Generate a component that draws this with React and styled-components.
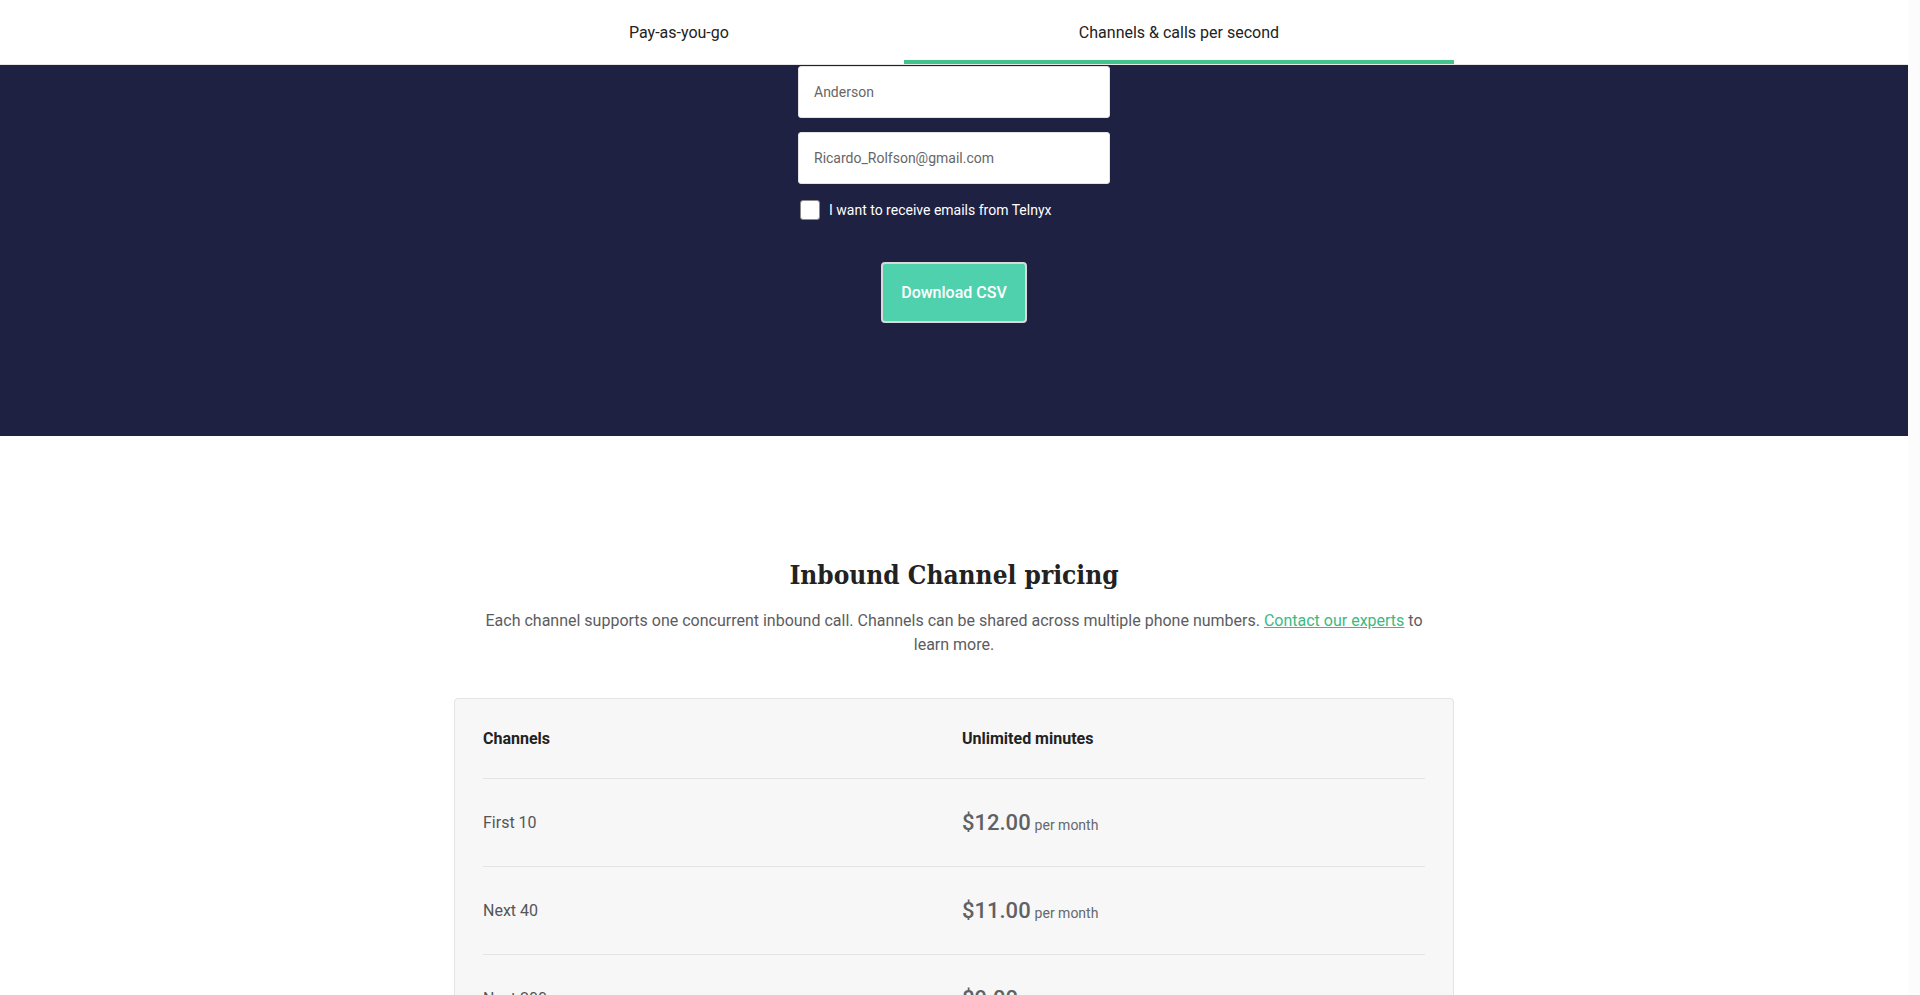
import React from "react";
import styled, { createGlobalStyle } from "styled-components";

const GlobalStyle = createGlobalStyle`
  html {
    background: #fcfcfc;
  }
  body {
    margin: 0 12px 0 0;
    padding: 0;
    background: #ffffff;
    font-family: Roboto, "Liberation Sans", sans-serif;
    color: #222;
  }
  * {
    box-sizing: border-box;
  }
`;

const tiers = [
  { label: "First 10", price: "$12.00" },
  { label: "Next 40", price: "$11.00" },
  { label: "Next 200", price: "$9.00" },
  { label: "Next 750", price: "$8.00" },
];

function App() {
  return (
    <>
      <GlobalStyle />
      <TabBar>
        <TabRow>
          <Tab>Pay-as-you-go</Tab>
          <Tab $active>Channels &amp; calls per second</Tab>
        </TabRow>
      </TabBar>

      <FormBand>
        <Form>
          <Field defaultValue="Anderson" />
          <Field defaultValue="Ricardo_Rolfson@gmail.com" />
          <CheckRow>
            <Box type="checkbox" />
            <span>I want to receive emails from Telnyx</span>
          </CheckRow>
          <DownloadBtn>Download CSV</DownloadBtn>
        </Form>
      </FormBand>

      <Pricing>
        <Title>Inbound Channel pricing</Title>
        <Lead>
          Each channel supports one concurrent inbound call. Channels can be
          shared across multiple phone numbers.{" "}
          <GreenLink href="#">Contact our experts</GreenLink> to learn more.
        </Lead>
        <Card>
          <HeadRow>
            <div>Channels</div>
            <div>Unlimited minutes</div>
          </HeadRow>
          {tiers.map((t) => (
            <Row key={t.label}>
              <div>{t.label}</div>
              <div>
                <Price>{t.price}</Price> <Per>per month</Per>
              </div>
            </Row>
          ))}
        </Card>
      </Pricing>
    </>
  );
}

const TabBar = styled.nav`
  background: #fff;
  border-bottom: 1px solid #e6e6e9;
`;

const TabRow = styled.div`
  display: flex;
  width: 1000px;
  margin: 0 auto;
`;

const Tab = styled.div`
  flex: 1 1 auto;
  height: 64px;
  display: flex;
  align-items: center;
  justify-content: center;
  padding-top: 4px;
  font-size: 16px;
  color: #222;
  border-bottom: 4px solid ${(p) => (p.$active ? "#42c38c" : "transparent")};
`;

const FormBand = styled.section`
  background: #1f2142;
  padding: 1px 0 113px;
`;

const Form = styled.div`
  width: 312px;
  margin: 0 auto;
  display: flex;
  flex-direction: column;
  align-items: center;
`;

const Field = styled.input`
  width: 100%;
  height: 52px;
  border: 1px solid #e3e3e3;
  border-radius: 3px;
  padding: 0 15px;
  font-family: Roboto, sans-serif;
  font-size: 14px;
  color: #666;
  background: #fff;
  outline: none;
  & + & {
    margin-top: 14px;
  }
`;

const CheckRow = styled.label`
  align-self: stretch;
  display: flex;
  align-items: center;
  gap: 9px;
  margin-top: 16px;
  padding-left: 2px;
  font-size: 14px;
  color: #fff;
`;

const Box = styled.input`
  appearance: none;
  margin: 0;
  width: 20px;
  height: 20px;
  background: #fff;
  border: 1px solid #8a8a8a;
  border-radius: 3px;
`;

const DownloadBtn = styled.button`
  margin-top: 42px;
  padding: 18px 18px;
  line-height: 21px;
  font-family: Roboto, sans-serif;
  font-size: 16px;
  font-weight: 500;
  color: #fff;
  background: #50d1ae;
  border: 2px solid #d9d9d9;
  border-radius: 4px;
  cursor: pointer;
`;

const Pricing = styled.section`
  padding: 119px 0 80px;
  display: flex;
  flex-direction: column;
  align-items: center;
`;

const Title = styled.h2`
  margin: 0;
  font-family: "DejaVu Serif Condensed", "DejaVu Serif", serif;
  font-stretch: condensed;
  font-weight: 700;
  font-size: 26px;
  line-height: 40px;
  color: #222;
`;

const Lead = styled.p`
  margin: 14px 0 0;
  max-width: 960px;
  text-align: center;
  font-size: 16px;
  line-height: 24px;
  color: #5c5c5f;
`;

const GreenLink = styled.a`
  color: #3db982;
  text-decoration: underline;
`;

const Card = styled.div`
  margin-top: 41px;
  width: 1000px;
  background: #f7f7f7;
  border: 1px solid #e4e4e8;
  border-radius: 4px;
  padding: 0 28px;
`;

const HeadRow = styled.div`
  display: grid;
  grid-template-columns: 479px 1fr;
  height: 80px;
  align-items: center;
  font-size: 16px;
  font-weight: 700;
  color: #222;
  border-bottom: 1px solid #e4e4e8;
`;

const Row = styled.div`
  display: grid;
  grid-template-columns: 479px 1fr;
  height: 88px;
  align-items: center;
  font-size: 16px;
  color: #555558;
  border-bottom: 1px solid #e4e4e8;
  &:last-child {
    border-bottom: none;
  }
`;

const Price = styled.span`
  font-size: 22px;
  font-weight: 500;
  color: #5f6165;
`;

const Per = styled.span`
  font-size: 14px;
  color: #66686c;
`;

export default App;
